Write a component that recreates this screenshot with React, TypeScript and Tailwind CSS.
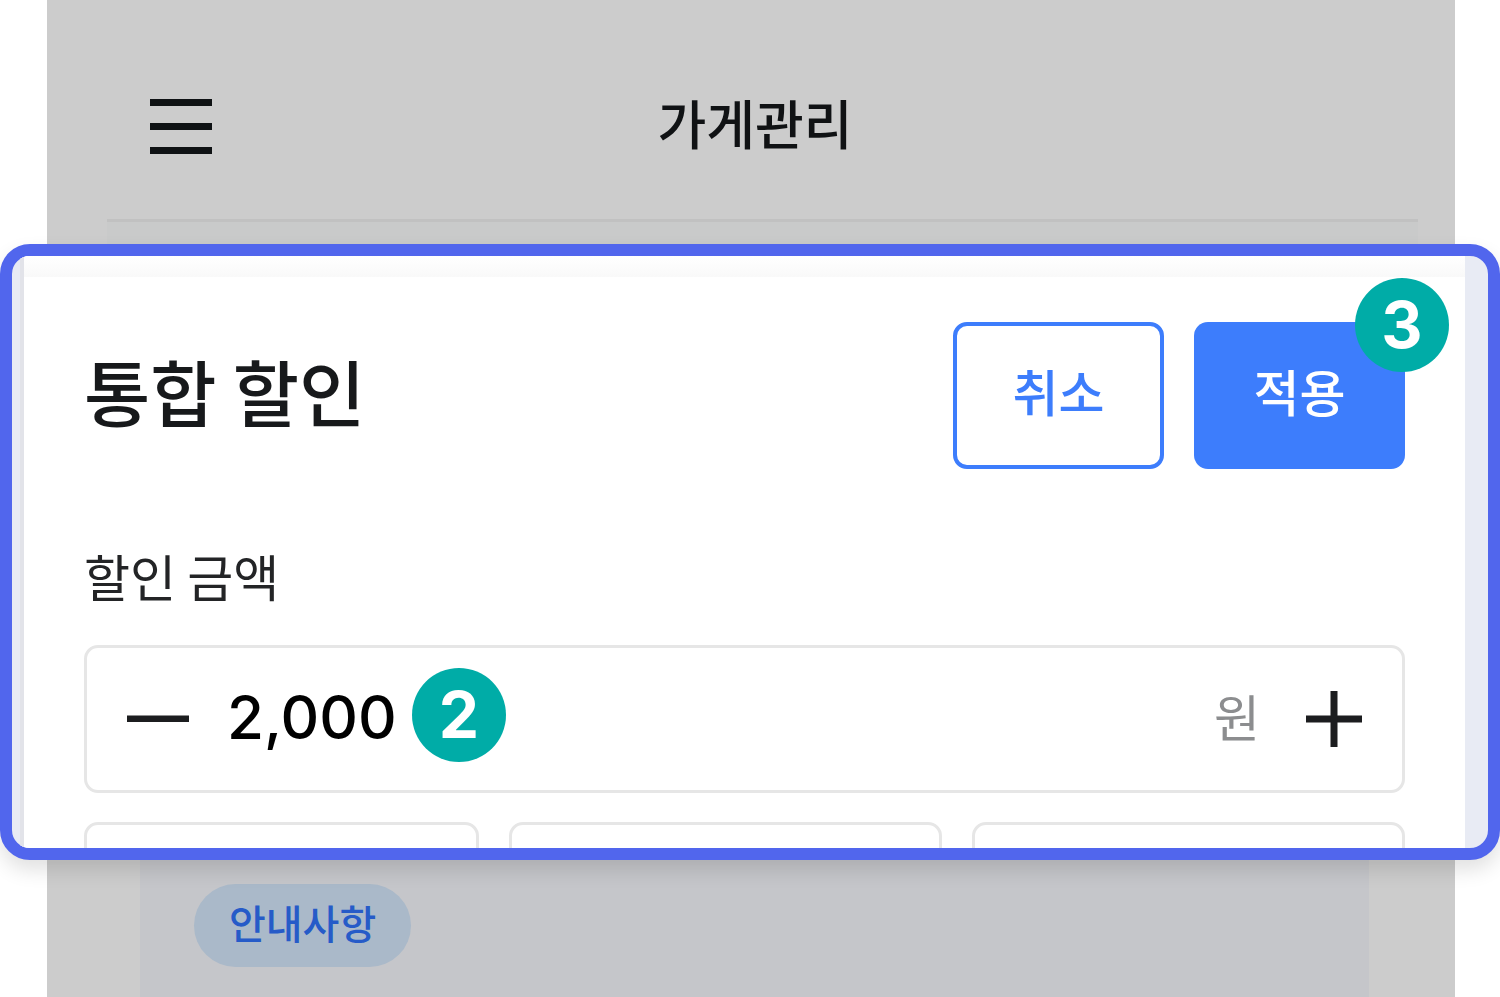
import { useState } from 'react'

const STEP = 1000

function StepBadge({ step, className }: { step: number; className: string }) {
  return (
    <span
      className={`absolute grid size-[94px] place-items-center rounded-full bg-[#00aca7] font-['Inter',sans-serif] text-[64px] leading-none font-bold text-white ${className}`}
    >
      {step}
    </span>
  )
}

function MenuIcon() {
  return (
    <svg className="h-[56px] w-[62px]" viewBox="0 0 62 56" fill="#0f1214" aria-hidden="true">
      <rect width="62" height="7" />
      <rect y="24" width="62" height="7" />
      <rect y="48" width="62" height="7" />
    </svg>
  )
}

function MinusIcon() {
  return (
    <svg className="h-[56px] w-[62px]" viewBox="0 0 62 56" fill="#1c1d1f" aria-hidden="true">
      <rect y="24.5" width="62" height="6.5" />
    </svg>
  )
}

function PlusIcon() {
  return (
    <svg className="size-[56px]" viewBox="0 0 56 56" fill="#1c1d1f" aria-hidden="true">
      <rect y="24.5" width="56" height="7" />
      <rect x="24.5" width="7" height="56" />
    </svg>
  )
}

function StoreHeader() {
  return (
    <header className="mr-[45px] ml-[47px] bg-[#cccccc]">
      <div className="grid h-[219px] grid-cols-[1fr_auto_1fr] items-center pt-[34px] pr-[95px] pl-[103px]">
        <button type="button" aria-label="메뉴" className="justify-self-start">
          <MenuIcon />
        </button>
        <h1 className="pb-2 text-[53px] leading-none font-medium text-[#101214]">가게관리</h1>
      </div>
      <div className="mr-[37px] ml-[60px] h-[25px] border-t-3 border-[#c1c1c1] bg-[#c9caca]" />
    </header>
  )
}

function DiscountPanel() {
  const [amount, setAmount] = useState(2000)

  return (
    <main className="relative z-10 h-[616px] overflow-hidden rounded-[30px] border-12 border-[#5166ed] bg-[#e8ebf4] pr-[23px] pl-2 shadow-[0_10px_20px_rgba(0,0,0,0.12)]">
      <div className="h-full border-l-4 border-[#e2e3e9] bg-white">
        <div className="h-[21px] bg-linear-to-b from-white to-[#f9f9f9]" />

        <div className="px-[60px] pt-[45px]">
          <div className="flex items-center gap-[30px]">
            <h2 className="mr-auto pb-3 text-[72px] leading-none font-medium text-[#17191b]">
              통합 할인
            </h2>
            <button
              type="button"
              className="h-[147px] w-[211px] rounded-[14px] border-4 border-[#3d7dfc] pb-3 text-[50px] leading-none font-medium text-[#3d7dfc]"
            >
              취소
            </button>
            <div className="relative">
              <button
                type="button"
                className="h-[147px] w-[211px] rounded-[14px] bg-[#3d7dfc] pb-3 text-[50px] leading-none font-medium text-white"
              >
                적용
              </button>
              <StepBadge step={3} className="-top-11 -right-11" />
            </div>
          </div>

          <label htmlFor="amount" className="mt-[81px] block text-[50px] leading-none text-[#232426]">
            할인 금액
          </label>
          <div className="relative mt-[45px] flex h-[148px] items-center rounded-[14px] border-3 border-[#e6e6e6] px-10">
            <button
              type="button"
              aria-label="감소"
              onClick={() => setAmount(Math.max(0, amount - STEP))}
            >
              <MinusIcon />
            </button>
            <input
              id="amount"
              inputMode="numeric"
              className="ml-[38px] min-w-0 flex-1 pb-1 font-['Inter',sans-serif] text-[60px] leading-none font-medium text-black outline-none"
              value={amount.toLocaleString('en-US')}
              onChange={(e) => setAmount(Number(e.target.value.replace(/\D/g, '')))}
            />
            <StepBadge step={2} className="top-5 left-[325px]" />
            <span className="mr-[46px] pb-2 text-[50px] leading-none text-[#8c8d8f]">원</span>
            <button type="button" aria-label="증가" onClick={() => setAmount(amount + STEP)}>
              <PlusIcon />
            </button>
          </div>

          <div className="mt-[29px] grid grid-cols-[395fr_433fr_433fr] gap-[30px]">
            <div className="h-[148px] rounded-[14px] border-3 border-[#e6e6e6]" />
            <div className="h-[148px] rounded-[14px] border-3 border-[#e6e6e6]" />
            <div className="h-[148px] rounded-[14px] border-3 border-[#e6e6e6]" />
          </div>
        </div>
      </div>
    </main>
  )
}

function Notice() {
  return (
    <section className="mr-[45px] ml-[47px] flex flex-1 bg-[#cccccc] pr-[86px] pl-[93px]">
      <div className="flex-1 bg-[#c5c6ca] pt-6 pl-[54px]">
        <h3 className="inline-flex h-[83px] items-center rounded-full bg-[#aab9c9] px-[35px] pb-2 text-[40px] leading-none font-medium text-[#265bc8]">
          안내사항
        </h3>
      </div>
    </section>
  )
}

export default function App() {
  return (
    <div className="flex min-h-screen flex-col bg-white font-['Noto_Sans_CJK_KR',sans-serif]">
      <StoreHeader />
      <DiscountPanel />
      <Notice />
    </div>
  )
}
